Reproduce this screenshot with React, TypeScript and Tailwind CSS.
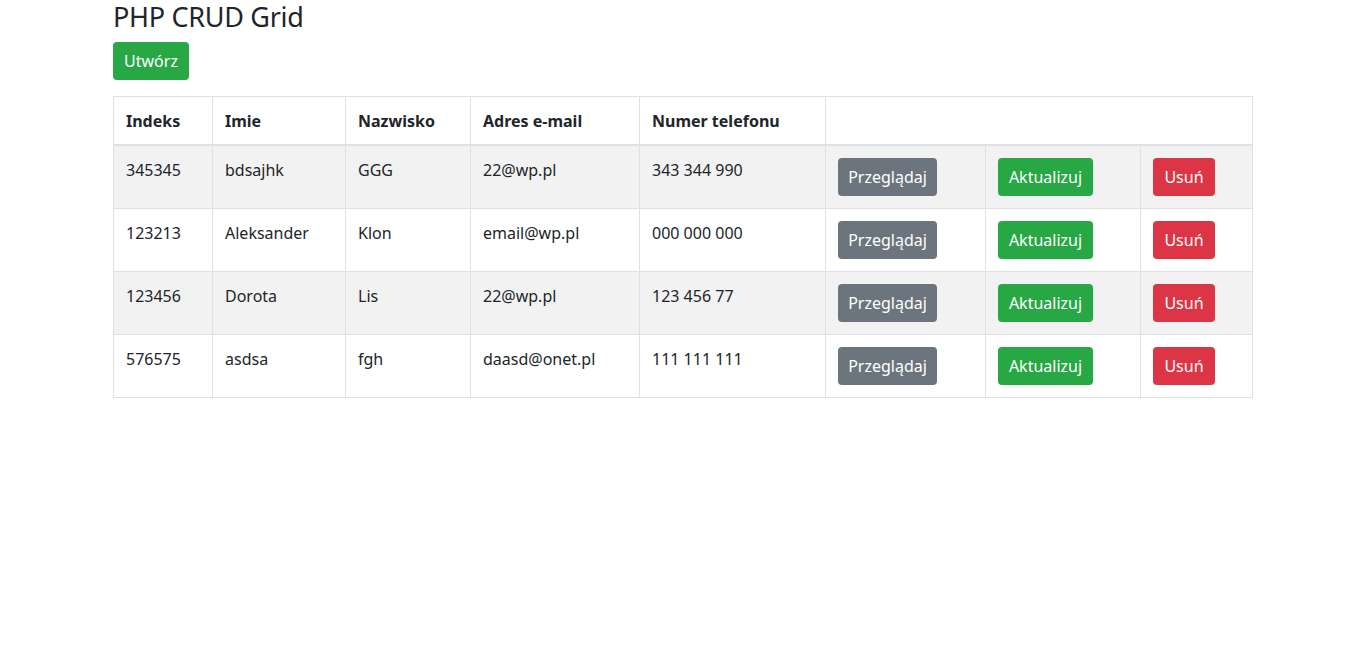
import React from "react";

const rows = [
  ["345345", "bdsajhk", "GGG", "22@wp.pl", "343 344 990"],
  ["123213", "Aleksander", "Klon", "email@wp.pl", "000 000 000"],
  ["123456", "Dorota", "Lis", "22@wp.pl", "123 456 77"],
  ["576575", "asdsa", "fgh", "daasd@onet.pl", "111 111 111"],
];

const widths = ["w-[99px]", "w-[133px]", "w-[125px]", "w-[169px]", "w-[186px]", "w-[160px]", "w-[155px]", "w-[112px]"];

export default function App() {
  return (
    <div
      className="min-h-[653px] bg-white text-[#212529] text-[16px] leading-[1.5]"
      style={{ fontFamily: '"Noto Sans", "Open Sans", sans-serif' }}
    >
      <div className="w-[1140px] mx-auto">
        <h3 className="text-[27px] leading-[33.6px] tracking-[-0.3px] font-normal mb-2">PHP CRUD Grid</h3>
        <button className="bg-[#28a745] text-white rounded-[4px] w-[76px] h-[38px] text-[16px] leading-[1.5]">
          Utwórz
        </button>
        <table className="mt-4 w-[1139px] border-collapse table-fixed border border-[#dee2e6]">
          <colgroup>
            {widths.map((w, i) => (
              <col key={i} className={w} />
            ))}
          </colgroup>
          <thead>
            <tr>
              {["Indeks", "Imie", "Nazwisko", "Adres e-mail", "Numer telefonu"].map((h) => (
                <th
                  key={h}
                  className="text-left font-bold px-3 pt-3 pb-[11px] border border-[#dee2e6] border-b-2 align-bottom"
                >
                  {h}
                </th>
              ))}
              <th colSpan={3} className="px-3 pt-3 pb-[11px] border border-[#dee2e6] border-b-2"></th>
            </tr>
          </thead>
          <tbody>
            {rows.map((r, i) => (
              <tr key={i} className={i % 2 === 0 ? "bg-[#f2f2f2]" : "bg-white"}>
                {r.map((c, j) => (
                  <td key={j} className="p-3 border border-[#dee2e6] align-top">
                    {c}
                  </td>
                ))}
                <td className="p-3 border border-[#dee2e6] align-top">
                  <button className="bg-[#6c757d] text-white rounded-[4px] h-[38px] w-[99px] text-[16px]">
                    Przeglądaj
                  </button>
                </td>
                <td className="p-3 border border-[#dee2e6] align-top">
                  <button className="bg-[#28a745] text-white rounded-[4px] h-[38px] w-[95px] text-[16px]">
                    Aktualizuj
                  </button>
                </td>
                <td className="p-3 border border-[#dee2e6] align-top">
                  <button className="bg-[#dc3545] text-white rounded-[4px] h-[38px] w-[62px] text-[16px]">
                    Usuń
                  </button>
                </td>
              </tr>
            ))}
          </tbody>
        </table>
      </div>
    </div>
  );
}
